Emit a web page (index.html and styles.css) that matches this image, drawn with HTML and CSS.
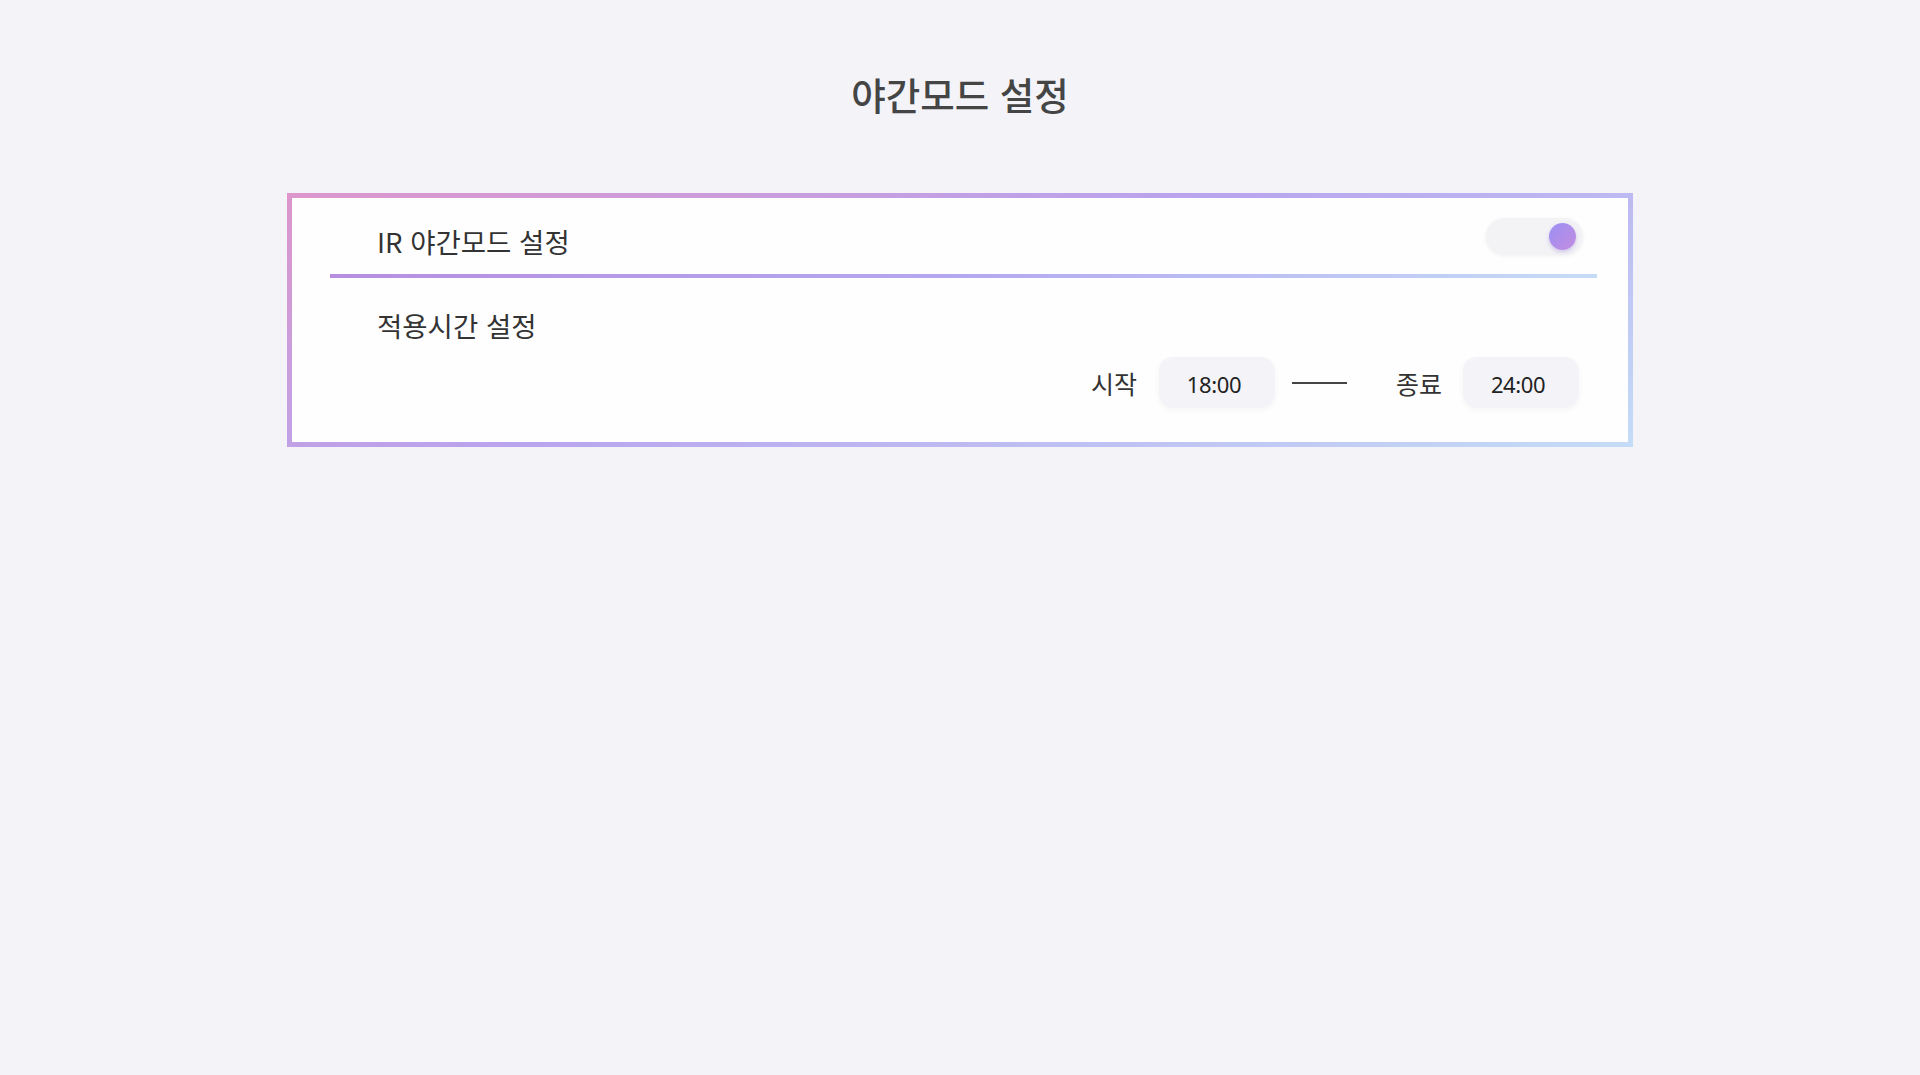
FILE: index.html
```html
<!DOCTYPE html>
<html lang="ko">
<head>
<meta charset="utf-8">
<title>야간모드 설정</title>
<link rel="stylesheet" href="styles.css">
</head>
<body>
<main class="page">
  <h1 class="title">야간모드 설정</h1>
  <section class="card">
    <div class="row-head">
      <span class="label">IR 야간모드 설정</span>
      <div class="toggle"><span class="knob"></span></div>
    </div>
    <div class="divider"></div>
    <div class="row-sub">
      <span class="label">적용시간 설정</span>
    </div>
    <div class="time-row">
      <span class="t-label">시작</span>
      <div class="t-box">18:00</div>
      <span class="dash"></span>
      <span class="t-label end">종료</span>
      <div class="t-box">24:00</div>
    </div>
  </section>
</main>
</body>
</html>
```
FILE: styles.css
```css
html, body {
  margin: 0;
  padding: 0;
  background: #f3f3f8;
  font-family: "Noto Sans CJK KR", "Noto Sans", sans-serif;
  color: #333;
}
.page {
  width: 1346px;
  margin: 0 auto;
  padding-top: 68px;
}
.title {
  margin: 0;
  text-align: center;
  font-size: 37.5px;
  font-weight: 500;
  color: #454545;
  line-height: 52px;
  height: 52px;
}
.card {
  margin-top: 73px;
  box-sizing: border-box;
  height: 254px;
  background: #fefefe;
  border: 5px solid transparent;
  border-image: linear-gradient(160deg, #dc96cc 0%, #b9a4ee 45%, #c4dcf8 100%) 1;
  padding: 0 31px 0 38px;
}
.row-head {
  display: flex;
  align-items: flex-start;
  justify-content: space-between;
  padding: 20px 14px 0 47px;
  height: 56px;
}
.label {
  font-size: 27.5px;
  font-weight: 400;
  color: #333;
  line-height: 36px;
}
.row-head .label {
  margin-top: 5px;
}
.toggle {
  width: 97px;
  height: 37px;
  border-radius: 19px;
  background: #f3f3f6;
  box-shadow: 0 1px 4px rgba(0,0,0,0.06);
  display: flex;
  align-items: center;
  justify-content: flex-end;
  padding-right: 7px;
  box-sizing: border-box;
}
.knob {
  width: 27px;
  height: 27px;
  border-radius: 50%;
  background: linear-gradient(135deg, #9a90f4 0%, #c48ce0 100%);
  box-shadow: 0 2px 4px rgba(140,110,200,0.35);
}
.divider {
  height: 4px;
  background: linear-gradient(90deg, #b78ee0 0%, #b4a8f0 50%, #c6dcf6 100%);
}
.row-sub {
  padding: 29px 0 0 47px;
  height: 40px;
}
.time-row {
  display: flex;
  align-items: center;
  justify-content: flex-end;
  padding-right: 18px;
  margin-top: 10px;
  height: 51px;
}
.t-label {
  font-size: 25px;
  color: #333;
  margin-right: 22px;
}
.t-label.end {
  margin-right: 21px;
}
.t-box {
  width: 116px;
  height: 51px;
  border-radius: 14px;
  background: #f4f4f8;
  box-shadow: 0 2px 6px rgba(0,0,0,0.04);
  display: flex;
  align-items: center;
  justify-content: center;
  font-family: "Noto Sans", "Noto Sans CJK KR", sans-serif;
  font-size: 22px;
  letter-spacing: -0.4px;
  color: #222;
  box-sizing: border-box;
  padding-right: 6px;
  padding-top: 2px;
}
.dash {
  width: 55px;
  height: 2px;
  background: #444;
  margin: 0 49px 0 17px;
}
```
